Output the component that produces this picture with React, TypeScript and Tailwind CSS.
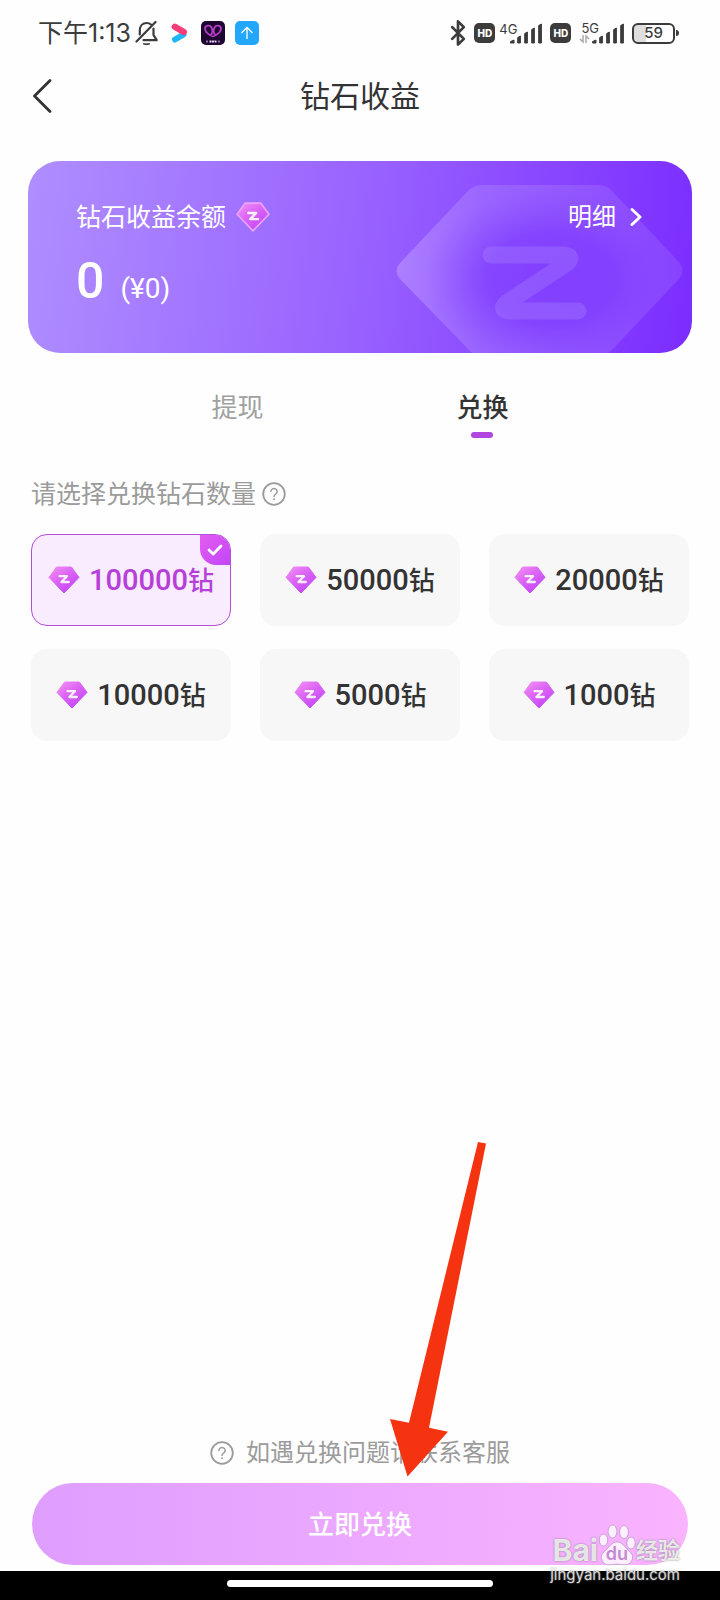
import { useState } from "react";
import { Bluetooth } from "lucide-react";

const AMOUNTS = [100000, 50000, 20000, 10000, 5000, 1000];
const TABS = ["提现", "兑换"];

function Diamond({ id, outlined, className }: { id: string; outlined?: boolean; className?: string }) {
  return (
    <svg viewBox="0 0 32 28" className={className} aria-hidden="true">
      <defs>
        <linearGradient id={id} x1="0.1" y1="0" x2="0.8" y2="0.9">
          <stop offset="0" stopColor="#f28df2" />
          <stop offset="0.45" stopColor="#dc66f4" />
          <stop offset="1" stopColor="#c445f8" />
        </linearGradient>
      </defs>
      <path
        d="M8.6 1h14.8L31 11.4 16 27 1 11.4z"
        fill={`url(#${id})`}
        stroke={outlined ? "#eaa2fb" : `url(#${id})`}
        strokeWidth={outlined ? 1.6 : 1}
        strokeLinejoin="round"
      />
      <path
        d="M11.6 10.2H19L13.4 16h7.4"
        fill="none"
        stroke="#fff"
        strokeOpacity="0.9"
        strokeWidth="2.3"
        strokeLinecap="round"
        strokeLinejoin="round"
      />
    </svg>
  );
}

function HelpIcon() {
  return (
    <svg viewBox="0 0 24 24" className="size-6 shrink-0" fill="none" stroke="#9b9b9b" strokeLinecap="round" aria-hidden="true">
      <circle cx="12" cy="12" r="10.8" strokeWidth="1.8" />
      <path d="M8.9 9.6a3.1 3.1 0 1 1 4.7 2.6c-1.1.7-1.6 1.2-1.6 2.4" strokeWidth="1.5" />
      <circle cx="12" cy="17.2" r="0.5" strokeWidth="0.9" fill="#9b9b9b" />
    </svg>
  );
}

function Signal() {
  return (
    <svg viewBox="0 0 33 21" className="h-[21px] w-[33px]" fill="#3c3c3c" stroke="#3c3c3c" strokeLinejoin="round" aria-hidden="true">
      <path d="M1.5 18.6 5 17V20H1.5z" />
      <path d="M8.7 14.5 11.4 13V20H8.7z" />
      <path d="M15.7 10.5 18.4 9V20H15.7z" />
      <path d="M22.7 6.5 25.4 5V20H22.7z" />
      <path d="M29.7 2.5 32.4 1V20H29.7z" />
    </svg>
  );
}

function HdBadge() {
  return (
    <span className="flex h-5 w-[21px] items-center justify-center rounded-[5px] bg-[#3c3c3c] text-[10px] font-extrabold text-white">
      HD
    </span>
  );
}

function StatusBar() {
  return (
    <div className="flex h-16 items-center justify-between pt-[2px] pr-[41px] pl-[38px] text-[#3c3c3c]">
      <div className="flex items-center">
        <span className="text-[25px] leading-8">下午1:13</span>
        <svg viewBox="0 0 24 26" className="ml-1 h-[26px] w-6" fill="none" stroke="#3c3c3c" strokeWidth="2.2" strokeLinecap="round" aria-hidden="true">
          <path d="M1.5 21.5 20.5 2" />
          <path d="M4.8 14.5v-4c0-4.8 3-7.5 6.8-7.5 1.8 0 3.2.5 4.4 1.5" />
          <path d="M18.5 8.5v6.5l3.2 5.2H8.5" strokeLinejoin="round" />
          <path d="M8.5 24a4.5 2.5 0 0 0 6 0z" fill="#3c3c3c" strokeWidth="1" />
        </svg>
        <svg viewBox="0 0 18 20" className="ml-3 h-5 w-[18px]" aria-hidden="true">
          <path d="M4 16.5 12.5 11.5" stroke="#1fb6f5" strokeWidth="6" strokeLinecap="round" />
          <path d="M3.8 3.8 12.8 9" stroke="#f63d78" strokeWidth="6.4" strokeLinecap="round" />
        </svg>
        <svg viewBox="0 0 24 24" className="ml-3 size-6" fill="none" aria-hidden="true">
          <rect width="24" height="24" rx="5" fill="#1d0630" />
          <path
            d="M11.8 15.5C6 13 4 10.5 4 7.8 4 4 9 3.6 10.5 6.5c1.3 2.6 1 5.5-.7 7.5M12.2 15.5C18 13 20 10.5 20 7.8 20 4 15 3.6 13.5 6.5c-1.3 2.6-1 5.5.7 7.5"
            stroke="#b63cc4"
            strokeWidth="1.8"
          />
          <path d="M5.5 20.5h1M8.5 20.5h7M17.5 20.5h1" stroke="#f2d8ff" strokeWidth="2" strokeDasharray="2 0.6" />
        </svg>
        <svg viewBox="0 0 24 24" className="ml-[10px] size-6" fill="none" aria-hidden="true">
          <rect width="24" height="24" rx="5" fill="#22a7fb" />
          <path d="M12 18V6.5M6.5 12 12 6.5l5.5 5.5" stroke="#fff" strokeWidth="1.3" />
        </svg>
      </div>
      <div className="flex items-center">
        <Bluetooth className="size-7" strokeWidth={2.3} />
        <div className="ml-[2px]">
          <HdBadge />
        </div>
        <div className="ml-1 flex items-end">
          <span className="-mr-2 self-start text-[13px] leading-3">4G</span>
          <Signal />
        </div>
        <div className="ml-2">
          <HdBadge />
        </div>
        <div className="ml-2 flex items-end">
          <span className="-mr-2 flex flex-col">
            <span className="pl-[2px] text-[13px] leading-3">5G</span>
            <svg viewBox="0 0 12 10" className="h-[10px] w-3" fill="none" stroke="#aaa" strokeWidth="1.5" aria-hidden="true">
              <path d="M4 1v7L1 5M7 9V2l3 3" />
            </svg>
          </span>
          <Signal />
        </div>
        <div className="ml-2 flex items-center gap-px">
          <span className="flex h-[21px] w-[43px] items-center justify-center rounded-md border-2 border-[#3c3c3c] bg-linear-to-r from-[#dedede] from-30% to-white to-30% text-[15px] font-medium leading-4">
            59
          </span>
          <span className="h-[6px] w-[3px] rounded-r-sm bg-[#3c3c3c]" />
        </div>
      </div>
    </div>
  );
}

function BalanceCard() {
  return (
    <section className="relative mx-7 mt-[33px] h-[192px] overflow-hidden rounded-[32px] bg-linear-[98deg] from-[#af8eff] via-[#9862ff] via-50% to-[#7b2cff] pr-[50px] pl-12 text-white">
      <svg viewBox="0 0 288 168" className="absolute right-2 bottom-0 h-[168px] w-[288px]" fill="none" aria-hidden="true">
        <defs>
          <linearGradient id="gem-side" x1="0" y1="0.5" x2="1" y2="0.5">
            <stop offset="0" stopColor="#c4a4ff" stopOpacity="0.5" />
            <stop offset="0.3" stopColor="#b08cff" stopOpacity="0.35" />
            <stop offset="1" stopColor="#b08cff" stopOpacity="0.2" />
          </linearGradient>
          <radialGradient id="gem-core">
            <stop offset="0" stopColor="#7d38ff" stopOpacity="0.8" />
            <stop offset="0.5" stopColor="#7f3cff" stopOpacity="0.75" />
            <stop offset="1" stopColor="#8a4eff" stopOpacity="0" />
          </radialGradient>
          <clipPath id="gem-shape">
            <path d="M4 94Q-3 86 4 78L72 6Q78 0 86 0H202Q210 0 215 5L283 77Q290 86 283 94L213 168H76z" />
          </clipPath>
        </defs>
        <g clipPath="url(#gem-shape)">
          <rect width="288" height="168" fill="url(#gem-side)" />
          <ellipse cx="155" cy="94" rx="128" ry="92" fill="url(#gem-core)" />
        </g>
        <path
          d="M95 70h73q10 1 3 8l-59 39q-10 8 2 9h68"
          stroke="#b18aff"
          strokeOpacity="0.3"
          strokeWidth="17"
          strokeLinecap="round"
          strokeLinejoin="round"
        />
      </svg>
      <div className="relative flex items-center justify-between pt-[38px]">
        <div className="flex items-center gap-[10px]">
          <h2 className="text-[25px] leading-9">钻石收益余额</h2>
          <Diamond id="gem-balance" outlined className="h-[30px] w-[34px]" />
        </div>
        <a href="#details" className="flex items-center gap-[14px] text-[24px] leading-9">
          明细
          <svg viewBox="0 0 12 20" className="h-5 w-3" fill="none" stroke="#fff" strokeWidth="3" strokeLinecap="round" strokeLinejoin="round" aria-hidden="true">
            <path d="M2 2.5 10 10 2 17.5" />
          </svg>
        </a>
      </div>
      <p className="relative mt-[18px] flex items-baseline gap-4 font-['Roboto','Noto_Sans_CJK_SC',sans-serif]">
        <span className="text-[50px] leading-[56px] font-medium">0</span>
        <span className="text-[28px] leading-8">(¥0)</span>
      </p>
    </section>
  );
}

export default function App() {
  const [tab, setTab] = useState("兑换");
  const [amount, setAmount] = useState(100000);

  return (
    <div className="relative flex min-h-screen flex-col bg-[#fefefe] font-['Inter','Noto_Sans_CJK_SC',sans-serif] text-[#333]">
      <StatusBar />

      <header className="grid h-16 grid-cols-[80px_1fr_80px] items-center">
        <button type="button" aria-label="返回" className="pl-8">
          <svg viewBox="0 0 20 34" className="h-[34px] w-5" fill="none" stroke="#333" strokeWidth="2.8" strokeLinecap="round" strokeLinejoin="round" aria-hidden="true">
            <path d="M18 1.5 2.5 17 18 32.5" />
          </svg>
        </button>
        <h1 className="text-center text-[30px] leading-10">钻石收益</h1>
      </header>

      <BalanceCard />

      <div role="tablist" className="mx-auto mt-[37px] grid w-[68%] grid-cols-2">
        {TABS.map((name) => (
          <button
            key={name}
            type="button"
            role="tab"
            aria-selected={tab === name}
            onClick={() => setTab(name)}
            className={`flex flex-col items-center gap-[6px] text-[26px] leading-9 ${tab === name ? "font-medium text-[#333]" : "text-[#a0a0a0]"}`}
          >
            {name}
            <span className={`h-[6px] w-[22px] rounded-full ${tab === name ? "bg-[#b246e0]" : ""}`} />
          </button>
        ))}
      </div>

      <fieldset className="mx-[31px] mt-[38px]">
        <legend className="flex items-center gap-[6px] text-[25px] leading-9 text-[#9b9b9b]">
          请选择兑换钻石数量
          <HelpIcon />
        </legend>
        <div className="mt-[22px] grid grid-cols-3 gap-x-[29px] gap-y-[23px]">
          {AMOUNTS.map((value) => {
            const selected = value === amount;
            return (
              <label
                key={value}
                className={`relative flex h-[92px] cursor-pointer items-center justify-center gap-[9px] overflow-hidden rounded-2xl border ${
                  selected ? "border-[#b04fd8] bg-[#f9ecfe] text-[#b53fd8]" : "border-transparent bg-[#f7f7f7]"
                }`}
              >
                <input
                  type="radio"
                  name="amount"
                  className="sr-only"
                  checked={selected}
                  onChange={() => setAmount(value)}
                />
                <Diamond id={`gem-${value}`} className="h-7 w-8" />
                <span className="flex items-baseline font-['Roboto','Noto_Sans_CJK_SC',sans-serif] font-medium">
                  <span className="text-[29px] leading-9">{value}</span>
                  <span className="text-[26px] leading-9">钻</span>
                </span>
                {selected && (
                  <span className="absolute top-0 right-0 flex size-[30px] items-center justify-center rounded-bl-2xl bg-linear-to-br from-[#e45cf0] to-[#c245f8]">
                    <svg viewBox="0 0 16 12" className="h-3 w-4" fill="none" stroke="#fff" strokeWidth="2.8" strokeLinecap="round" strokeLinejoin="round" aria-hidden="true">
                      <path d="M2 6 6.2 10 14 2" />
                    </svg>
                  </span>
                )}
              </label>
            );
          })}
        </div>
      </fieldset>

      <footer className="mt-auto">
        <a href="#support" className="flex items-center justify-center gap-3 text-[24px] leading-9 text-[#9b9b9b]">
          <HelpIcon />
          如遇兑换问题请联系客服
        </a>
        <div className="px-8 pt-3 pb-[6px]">
          <button
            type="button"
            className="h-[82px] w-full rounded-full bg-linear-to-r from-[#df9eff] to-[#f9b3ff] text-[26px] font-medium text-white"
          >
            立即兑换
          </button>
        </div>
        <div className="flex h-[29px] justify-center bg-black pt-[9px]">
          <span className="h-[7px] w-[37%] rounded-full bg-white" />
        </div>
      </footer>

      <svg viewBox="0 0 100 336" className="pointer-events-none absolute right-[232px] bottom-[123px] h-[336px] w-[100px]" fill="#f53311" aria-hidden="true">
        <path d="M90 1 98 2.5 41 286.7 60 290.7 19.5 335.5 2 278 21 281.7z" />
      </svg>

      <div className="pointer-events-none absolute right-10 bottom-4 flex flex-col items-end text-white/80 [text-shadow:0_0_2px_#777]">
        <div className="flex items-end">
          <span className="text-[30px] leading-8 font-bold">Bai</span>
          <span className="relative flex h-[42px] w-[38px] items-end justify-center">
            <svg viewBox="0 0 38 42" className="absolute inset-0" fill="#fff" fillOpacity="0.8" stroke="#a58bb0" strokeOpacity="0.6" aria-hidden="true">
              <ellipse cx="5.5" cy="16" rx="4.2" ry="6" />
              <ellipse cx="14.5" cy="7.5" rx="4.4" ry="6.5" />
              <ellipse cx="26" cy="8" rx="4.4" ry="6.5" />
              <ellipse cx="33" cy="19" rx="4.2" ry="6" />
              <path d="M19 18c5 0 7 4 10 7 4 4 7 6 5 11-2 6-8 5-15 4-7 1-13 2-15-4-2-5 1-7 5-11 3-3 5-7 10-7z" />
            </svg>
            <span className="relative text-[18px] leading-6 font-semibold text-[#c28bd0] [text-shadow:none]">du</span>
          </span>
          <span className="text-[22px] leading-8 font-bold">经验</span>
        </div>
        <span className="text-[15px] leading-[18px]">jingyan.baidu.com</span>
      </div>
    </div>
  );
}
